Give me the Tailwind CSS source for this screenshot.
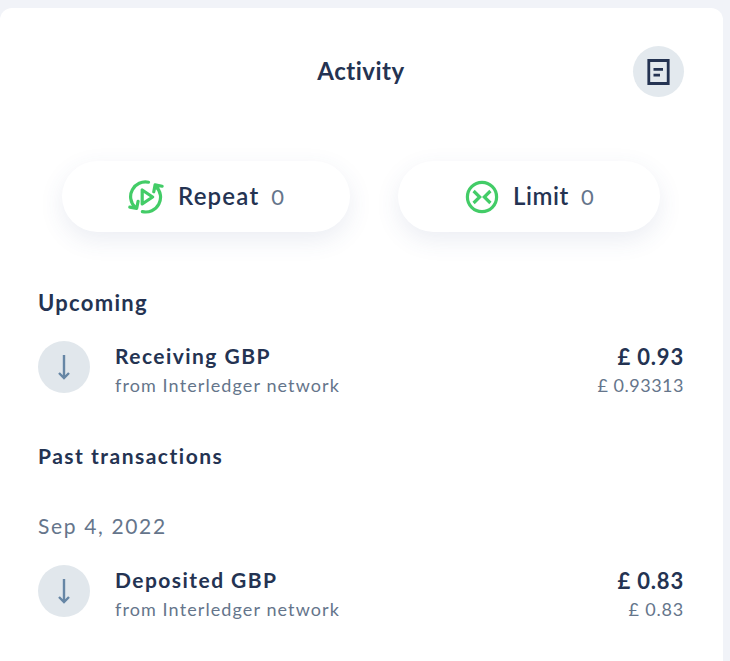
<!DOCTYPE html>
<html lang="en">
<head>
<meta charset="utf-8">
<title>Activity</title>
<script src="https://cdn.jsdelivr.net/npm/@tailwindcss/browser@4"></script>
</head>
<body class="h-[661px] overflow-hidden bg-[#f1f3f8] pt-2 font-['Lato','Open_Sans',sans-serif] text-[#243352]">
<main class="h-[680px] w-[723px] rounded-t-[12px] bg-white pr-[39px] pl-[38px]">
  <header class="grid h-[127px] grid-cols-[51px_1fr_51px] items-center">
    <span></span>
    <h1 class="pb-px text-center text-2xl font-bold"><span class="tracking-[0.5px]">Activity</span></h1>
    <button class="flex size-[51px] items-center justify-center rounded-full bg-[#e3e9ee]" aria-label="Statement">
      <svg class="h-[26px] w-[23px]" viewBox="0 0 23 26" fill="none" stroke="#243352" stroke-width="2.8"><path d="M1.8 1.5h19.4v23H1.8zM6.5 10.3h9.5M6.5 16.2h6.5"/></svg>
    </button>
  </header>
  <div class="flex gap-12 pt-[26px] pl-6">
    <button class="flex h-[71px] w-[288px] items-center rounded-full bg-white pl-[66px] shadow-[0_8px_24px_rgba(60,75,140,0.10)]">
      <svg class="h-[34px] w-[36px] shrink-0" viewBox="0 0 36 34" fill="none" stroke="#43cc67" stroke-width="3.2" stroke-linecap="round" stroke-linejoin="round"><path d="M20.5 2.2A14.8 14.8 0 0 0 7 27.2M14.4 31.6A14.8 14.8 0 0 0 28 6.5M1.8 27.2l6.9 1.1 1.4-7M25.8 11.8l1.3-7 7 1.4M14.2 10v14l10.4-7z"/></svg>
      <span class="ml-[14px] pb-0.5 text-2xl font-semibold tracking-[1.2px]">Repeat</span>
      <span class="ml-3 text-[22px] text-[#65758b]">0</span>
    </button>
    <button class="flex h-[71px] w-[262px] items-center rounded-full bg-white pl-[67px] shadow-[0_8px_24px_rgba(60,75,140,0.10)]">
      <svg class="size-[34px] shrink-0" viewBox="0 0 34 34" fill="none" stroke="#43cc67" stroke-width="3.2"><circle cx="17" cy="17" r="14.6"/><path d="M8.6 11l6.1 6-6.1 6M25.4 11l-6.1 6 6.1 6"/></svg>
      <span class="ml-[14px] pb-0.5 text-2xl font-semibold tracking-[0.6px]">Limit</span>
      <span class="ml-3 text-[22px] text-[#65758b]">0</span>
    </button>
  </div>
  <h2 class="mt-[57px] text-[22px] leading-7 font-bold"><span class="tracking-[1.3px]">Upcoming</span></h2>
  <section class="mt-[21px] flex h-[56px]">
    <div class="mt-[3px] flex size-[52px] items-center justify-center rounded-full bg-[#e1e7ec]">
      <svg class="h-[26px] w-[14px]" viewBox="0 0 14 26" fill="none" stroke="#6686a5" stroke-width="2.4"><path d="M7 1v22.5M2 19l5 5 5-5"/></svg>
    </div>
    <div class="ml-[25px] flex-1">
      <div class="h-7 text-[21px] leading-[36px] font-bold"><span class="tracking-[1.45px]">Receiving GBP</span></div>
      <div class="h-7 text-[18px] leading-[38px] text-[#65758b]"><span class="tracking-[1.1px]">from Interledger network</span></div>
    </div>
    <div class="text-right">
      <div class="h-7 text-[22px] leading-[38px] font-bold"><span class="tracking-[0.8px]">£ 0.93</span></div>
      <div class="h-7 text-[18px] leading-[38px] text-[#65758b]"><span class="tracking-[0.5px]">£ 0.93313</span></div>
    </div>
  </section>
  <h2 class="mt-[48px] text-[21px] leading-7 font-bold"><span class="tracking-[1.5px]">Past transactions</span></h2>
  <p class="mt-[42px] text-[21px] leading-7 text-[#65758b]"><span class="tracking-[1.65px]">Sep 4, 2022</span></p>
  <section class="mt-[22px] flex h-[56px]">
    <div class="mt-[3px] flex size-[52px] items-center justify-center rounded-full bg-[#e1e7ec]">
      <svg class="h-[26px] w-[14px]" viewBox="0 0 14 26" fill="none" stroke="#6686a5" stroke-width="2.4"><path d="M7 1v22.5M2 19l5 5 5-5"/></svg>
    </div>
    <div class="ml-[25px] flex-1">
      <div class="h-7 text-[21px] leading-[36px] font-bold"><span class="tracking-[1.45px]">Deposited GBP</span></div>
      <div class="h-7 text-[18px] leading-[38px] text-[#65758b]"><span class="tracking-[1.1px]">from Interledger network</span></div>
    </div>
    <div class="text-right">
      <div class="h-7 text-[22px] leading-[38px] font-bold"><span class="tracking-[0.8px]">£ 0.83</span></div>
      <div class="h-7 text-[18px] leading-[38px] text-[#65758b]"><span class="tracking-[0.8px]">£ 0.83</span></div>
    </div>
  </section>
</main>
</body>
</html>
